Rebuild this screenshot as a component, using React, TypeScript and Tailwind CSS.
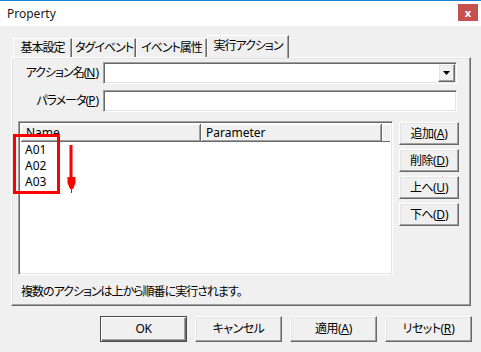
import React from 'react';

const raised =
  'border border-t-white border-l-white border-r-[#696969] border-b-[#696969] shadow-[inset_-1px_-1px_0_#a0a0a0,inset_1px_1px_0_#e3e3e3]';
const sunken =
  'border border-t-[#a0a0a0] border-l-[#a0a0a0] border-r-white border-b-white shadow-[inset_1px_1px_0_#696969,inset_-1px_-1px_0_#e3e3e3]';

function Key({ k }: { k: string }) {
  return <span className="underline underline-offset-[1px] tracking-normal">{k}</span>;
}

function SideButton({ label, k }: { label: string; k: string }) {
  return (
    <div className={`h-[23px] w-[60px] flex items-center justify-center bg-[#f0f0f0] tracking-[-0.5px] ${raised}`}>
      {label}(<Key k={k} />)
    </div>
  );
}

function FooterButton({ children, isDefault }: { children: React.ReactNode; isDefault?: boolean }) {
  return (
    <div
      className={`h-[26px] w-[87px] flex items-center justify-center bg-[#f0f0f0] tracking-[-0.5px] ${
        isDefault
          ? 'border border-[#4a4a4a] shadow-[inset_1px_1px_0_#ffffff,inset_-1px_-1px_0_#696969,inset_-2px_-2px_0_#a0a0a0]'
          : raised
      }`}
    >
      {children}
    </div>
  );
}

export default function App() {
  const tabs = ['基本設定', 'タグイベント', 'イベント属性'];

  return (
    <div
      className="relative w-[481px] h-[352px] overflow-hidden bg-[#f0f0f0] text-[12px] leading-none text-black flex flex-col [font-feature-settings:'palt']"
      style={{ fontFamily: "'Noto Sans', 'Noto Sans CJK JP', sans-serif" }}
    >
      {/* title bar */}
      <div className="h-[26px] shrink-0 bg-white border-t border-[#1a7fd4] flex items-center justify-between pl-[7px] pr-[3px]">
        <span className="text-[12px] text-[#1a1a1a]">Property</span>
        <div className="w-[20px] h-[17px] -mt-[3px] bg-[#c75050] flex items-center justify-center text-white text-[11px] font-bold">
          x
        </div>
      </div>

      <div className="px-[11px] pt-[9px] flex flex-col">
        {/* tabs */}
        <div className="h-[22px] flex items-end pl-[2px]">
          {tabs.map((t, i) => (
            <div
              key={t}
              className={`h-[19px] flex items-center justify-center whitespace-nowrap tracking-[-1px] border-t border-l border-white border-r border-r-[#696969] shadow-[inset_-1px_0_0_#a0a0a0] ${
                i === 0 ? 'w-[59px]' : i === 1 ? 'w-[64px]' : 'w-[71px]'
              }`}
            >
              {t}
            </div>
          ))}
          <div className="relative z-10 -mb-px h-[23px] w-[82px] bg-[#f0f0f0] flex items-center justify-center whitespace-nowrap tracking-[-1px] border-t border-l border-white border-r border-r-[#696969] shadow-[inset_-1px_0_0_#a0a0a0]">
            <span className="-mt-[2px]">実行アクション</span>
          </div>
        </div>

        {/* panel */}
        <div className={`h-[249px] w-[460px] pt-[4px] ${raised}`}>
          <div className="flex items-center h-[22px]">
            <div className="w-[86px] text-right whitespace-nowrap tracking-[-1px]">
              アクション名(<Key k="N" />)
            </div>
            <div className={`ml-[5px] w-[354px] h-[22px] bg-white flex items-center justify-end pr-[1px] ${sunken}`}>
              <div className={`w-[17px] h-[18px] bg-[#f0f0f0] flex items-center justify-center ${raised}`}>
                <svg width="7" height="4" viewBox="0 0 7 4">
                  <path d="M0 0H7L3.5 4Z" fill="#000" />
                </svg>
              </div>
            </div>
          </div>

          <div className="flex items-center h-[22px] mt-[6px]">
            <div className="w-[86px] text-right whitespace-nowrap tracking-[-1px]">
              パラメータ(<Key k="P" />)
            </div>
            <div className={`ml-[5px] w-[354px] h-[22px] bg-white ${sunken}`} />
          </div>

          <div className="flex mt-[9px] ml-[6px] gap-[6px]">
            <div className={`w-[375px] h-[154px] bg-white p-[2px] flex flex-col ${sunken}`}>
              <div className="h-[18px] flex bg-[#f0f0f0]">
                <div className="w-[180px] flex items-center pl-[5px] border-r border-b border-[#696969] shadow-[inset_1px_1px_0_#ffffff,inset_-1px_-1px_0_#a0a0a0]">
                  Name
                </div>
                <div className="w-[181px] flex items-center pl-[5px] border-r border-b border-[#696969] shadow-[inset_1px_1px_0_#ffffff,inset_-1px_-1px_0_#a0a0a0]">
                  Parameter
                </div>
                <div className="flex-1 border-b border-[#696969] shadow-[inset_1px_1px_0_#ffffff]" />
              </div>
              <div className="flex flex-col pl-[4px]">
                {['A01', 'A02', 'A03'].map((a) => (
                  <div key={a} className="h-[16px] flex items-center">
                    {a}
                  </div>
                ))}
              </div>
            </div>

            <div className="flex flex-col gap-[4px] mt-px">
              <SideButton label="追加" k="A" />
              <SideButton label="削除" k="D" />
              <SideButton label="上へ" k="U" />
              <SideButton label="下へ" k="D" />
            </div>
          </div>

          <div className="mt-[9px] ml-[9px] leading-[16px] tracking-[-1px]">
            複数のアクションは上から順番に実行されます。
          </div>
        </div>

        {/* footer buttons */}
        <div className="mt-[10px] flex justify-end gap-[8px] -mr-[2px]">
          <FooterButton isDefault>OK</FooterButton>
          <FooterButton>キャンセル</FooterButton>
          <FooterButton>
            適用(<Key k="A" />)
          </FooterButton>
          <FooterButton>
            リセット(<Key k="R" />)
          </FooterButton>
        </div>
      </div>

      {/* annotation overlay */}
      <div className="absolute left-[13px] top-[134px] w-[47px] h-[60px] border-[3px] border-[#ff0000]" />
      <svg className="absolute left-[66px] top-[145px]" width="11" height="48" viewBox="0 0 11 48">
        <rect x="3.5" y="0" width="3" height="34" fill="#ff0000" />
        <path d="M1.5 32H9.5V38L7 44H6V48H5V44H4L1.5 38Z" fill="#ff0000" />
      </svg>
    </div>
  );
}
